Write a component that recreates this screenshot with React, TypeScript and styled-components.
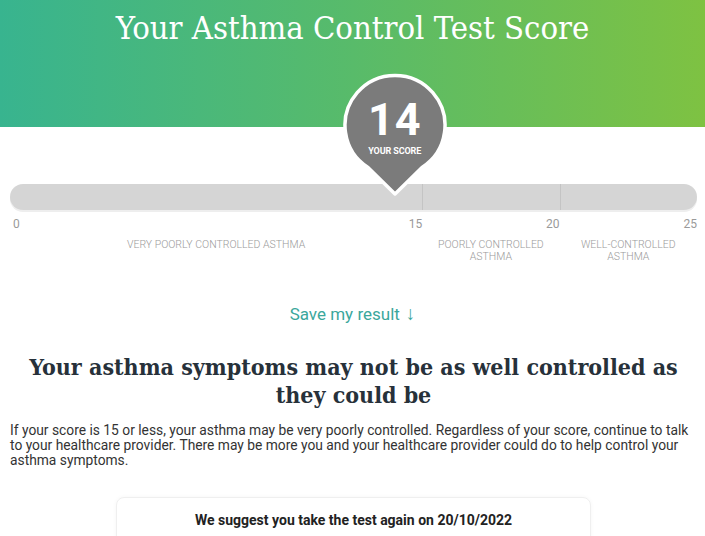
import React from 'react'
import styled, { createGlobalStyle } from 'styled-components'

const GlobalStyle = createGlobalStyle`
    body {
        margin: 0;
        background: #ffffff;
        font-family: Roboto, "Liberation Sans", sans-serif;
    }
`

const color = {
    pin: '#7b7b7b',
    track: '#d5d5d5',
    tick: '#c4c4c4',
    label: '#9a9a9a',
    teal: '#3ba79c',
    heading: '#27313a',
    text: '#333333',
}

const SCORE = 14
const MAX = 25

const Page = styled.div`
    width: 705px;
    overflow: hidden;
`

const Header = styled.header`
    height: 127px;
    background: linear-gradient(90deg, #38b48f 0%, #58bb6a 50%, #7ec242 100%);
    text-align: center;
    box-sizing: border-box;
    padding-top: 10px;
`

const Title = styled.h1`
    margin: 0;
    color: #ffffff;
    font-family: "DejaVu Serif", "Liberation Serif", serif;
    font-stretch: condensed;
    font-weight: normal;
    font-size: 32.5px;
    line-height: 36px;
`

const ScaleSection = styled.section`
    padding: 57px 8px 0 10px;
`

const Track = styled.div`
    position: relative;
    height: 26px;
    border-radius: 13px;
    background: ${color.track};
    box-shadow: 0 2px 0 #eeeeee;
    display: grid;
    grid-template-columns: 60% 20% 20%;
`

const Segment = styled.div<{ $divider?: boolean }>`
    border-left: ${p => (p.$divider ? `1px solid ${color.tick}` : 'none')};
`

const Pin = styled.div`
    position: absolute;
    bottom: 14px;
    width: 104px;
    height: 123px;
    transform: translateX(-50%);
    display: flex;
    flex-direction: column;
    align-items: center;
    color: #ffffff;
`

const PinShape = styled.svg`
    position: absolute;
    inset: 0;
`

const PinScore = styled.div`
    position: relative;
    margin-top: 23px;
    font-size: 45px;
    font-weight: 700;
    line-height: 48px;
    letter-spacing: 1px;
`

const PinCaption = styled.div`
    position: relative;
    margin-top: 2px;
    font-size: 9px;
    font-weight: 700;
    letter-spacing: -0.1px;
`

const AxisRow = styled.div`
    display: grid;
    grid-template-columns: 60% 20% 20%;
    margin-top: 7px;
    font-size: 12px;
    line-height: 14px;
    color: ${color.label};
`

const AxisCell = styled.div<{ $split?: boolean }>`
    display: flex;
    justify-content: ${p => (p.$split ? 'space-between' : 'flex-end')};
    padding-left: ${p => (p.$split ? '3px' : '0')};
`

const ZoneRow = styled.div`
    display: grid;
    grid-template-columns: 60% 20% 20%;
    margin-top: 8px;
`

const ZoneLabel = styled.div`
    text-align: center;
    font-size: 10.5px;
    line-height: 12px;
    font-weight: 300;
    color: ${color.label};
    text-transform: uppercase;
    padding: 0 8px;
`

const SaveLink = styled.a`
    display: block;
    margin-top: 41px;
    text-align: center;
    color: ${color.teal};
    font-size: 17px;
    line-height: 20px;
    text-decoration: none;
`

const Arrow = styled.span`
    margin-left: 6px;
    font-size: 19px;
    font-weight: 300;
`

const Content = styled.main`
    padding: 0 8px 0 10px;
`

const Heading = styled.h2`
    margin: 29px 0 0;
    text-align: center;
    color: ${color.heading};
    font-family: "DejaVu Serif", "Liberation Serif", serif;
    font-stretch: condensed;
    font-weight: 700;
    font-size: 23px;
    line-height: 28px;
`

const Paragraph = styled.p`
    margin: 14px 0 0;
    color: ${color.text};
    font-size: 13.8px;
    line-height: 15px;
`

const Card = styled.div`
    margin: 29px auto 0;
    width: 475px;
    box-sizing: border-box;
    border: 1px solid #efefef;
    border-radius: 8px;
    box-shadow: 0 0 4px rgba(0, 0, 0, 0.04);
    padding: 14px 10px 20px;
    text-align: center;
    font-size: 14px;
    font-weight: 700;
    color: #222222;
`

const ScorePin = ({ score }: { score: number }) => (
    <Pin style={{ left: `${(score / MAX) * 100}%` }}>
        <PinShape viewBox="0 0 104 123" width="104" height="123">
            <path
                d="M52 121 L25 94.5 A50 50 0 1 1 79 94.5 Z"
                fill={color.pin}
                stroke="#ffffff"
                strokeWidth="3.5"
                strokeLinejoin="round"
            />
        </PinShape>
        <PinScore>{score}</PinScore>
        <PinCaption>YOUR SCORE</PinCaption>
    </Pin>
)

export default function App() {
    return (
        <Page>
            <GlobalStyle />
            <Header>
                <Title>Your Asthma Control Test Score</Title>
            </Header>
            <ScaleSection>
                <Track>
                    <Segment />
                    <Segment $divider />
                    <Segment $divider />
                    <ScorePin score={SCORE} />
                </Track>
                <AxisRow>
                    <AxisCell $split>
                        <span>0</span>
                        <span>15</span>
                    </AxisCell>
                    <AxisCell>20</AxisCell>
                    <AxisCell>25</AxisCell>
                </AxisRow>
                <ZoneRow>
                    <ZoneLabel>Very poorly controlled asthma</ZoneLabel>
                    <ZoneLabel>Poorly controlled asthma</ZoneLabel>
                    <ZoneLabel>Well-controlled asthma</ZoneLabel>
                </ZoneRow>
            </ScaleSection>
            <SaveLink href="#save">
                Save my result<Arrow>↓</Arrow>
            </SaveLink>
            <Content>
                <Heading>Your asthma symptoms may not be as well controlled as they could be</Heading>
                <Paragraph>
                    If your score is 15 or less, your asthma may be very poorly controlled. Regardless of your score,
                    continue to talk to your healthcare provider. There may be more you and your healthcare provider
                    could do to help control your asthma symptoms.
                </Paragraph>
                <Card>We suggest you take the test again on 20/10/2022</Card>
            </Content>
        </Page>
    )
}
